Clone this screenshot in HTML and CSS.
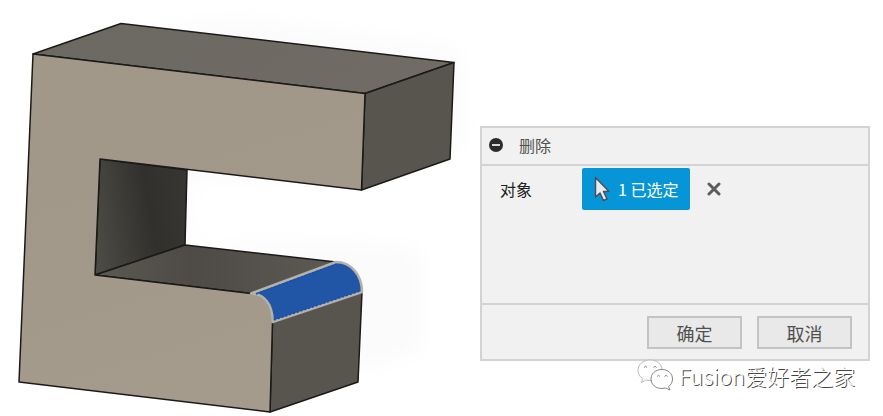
FILE: index.html
```html
<!DOCTYPE html>
<html lang="zh-CN">
<head>
<meta charset="utf-8">
<title>删除</title>
<link rel="stylesheet" href="styles.css">
</head>
<body>
<main class="workspace">
  <svg class="model" viewBox="0 0 480 416" aria-hidden="true">
    <defs>
      <linearGradient id="front" x1="0" y1="0" x2="0.3" y2="1">
        <stop offset="0" stop-color="#a1988a"/>
        <stop offset="0.4" stop-color="#a19889"/>
        <stop offset="1" stop-color="#a49b8c"/>
      </linearGradient>
      <linearGradient id="top" x1="0" y1="0" x2="1" y2="0.2">
        <stop offset="0" stop-color="#6b6961"/>
        <stop offset="1" stop-color="#706b65"/>
      </linearGradient>
      <linearGradient id="inner" x1="0" y1="0.6" x2="1" y2="0.4">
        <stop offset="0" stop-color="#4c4a45"/>
        <stop offset="0.6" stop-color="#32302c"/>
        <stop offset="1" stop-color="#373531"/>
      </linearGradient>
      <linearGradient id="floor" x1="0" y1="0" x2="1" y2="0">
        <stop offset="0" stop-color="#5c5952"/>
        <stop offset="0.4" stop-color="#4e4b46"/>
        <stop offset="1" stop-color="#5d5a54"/>
      </linearGradient>
      <filter id="soft" x="-10%" y="-10%" width="120%" height="120%">
        <feGaussianBlur stdDeviation="10"/>
      </filter>
    </defs>
    <path fill="#fbfbfb" filter="url(#soft)" d="M121 33L240 18L460 48L465 145L362 180H187V245L340 240L422 250V350L358 372L300 300L150 200Z"/>
    <g stroke="#1b1a18" stroke-width="1.5" stroke-linejoin="round">
      <path fill="url(#top)" d="M33 54L121 23.5L454 62.5L365 93.5Z"/>
      <path fill="#58554e" d="M365 93.5L454 62.5L450 159L361.500 190Z"/>
      <path fill="url(#inner)" d="M100 159L187 170L185 245L95 275Z"/>
      <path fill="url(#floor)" d="M95 275L185 245L336 262L251 293.500Z"/>
      <path fill="#58554e" d="M272.500 322L362 292L358 382L270 412Z"/>
      <path fill="url(#front)" d="M33 54L365 93.500L361.500 190L100 159L95 275L251 293.500C264 294 273 304 272.500 322L270 412L19 382Z"/>
    </g>
    <path fill="#2155a5" stroke="#b5b2ac" stroke-width="2.500" stroke-linejoin="round" d="M251 293.500L336 262C351 262 362 275 362 292L272.500 322C273 304 264 294 251 293.500Z"/>
    <path fill="none" stroke="#164fae" stroke-width="1.500" stroke-dasharray="2 2" d="M256 294L337 264M274 320L360 291"/>
  </svg>

  <div class="side">
    <section class="dialog" aria-labelledby="dialog-title">
      <header class="dialog-header">
        <button class="icon-button" type="button" aria-label="折叠">
          <svg width="14" height="14" viewBox="0 0 14 14"><circle cx="7" cy="7" r="7" fill="#2b2b2b"/><path d="M3 7H11" stroke="#d8d8d8" stroke-width="2"/></svg>
        </button>
        <h1 class="title" id="dialog-title">删除</h1>
      </header>
      <div class="dialog-body">
        <span class="label" id="object-label">对象</span>
        <button class="selection" type="button" aria-describedby="object-label">
          <svg width="16" height="26" viewBox="0 0 16 26"><path d="M1.500 1.500V21L6 17L9.500 24.500L13 23L9.500 15.500H15Z" fill="#e9ecee" stroke="#46525b" stroke-width="1.500" stroke-linejoin="round"/></svg>
          <span>1 已选定</span>
        </button>
        <button class="icon-button" type="button" aria-label="清除选择">
          <svg width="14" height="14" viewBox="0 0 14 14"><path d="M2 2L12 12M12 2L2 12" stroke="#5c5c5c" stroke-width="3" stroke-linecap="round"/></svg>
        </button>
      </div>
      <footer class="dialog-footer">
        <button class="action" type="button">确定</button>
        <button class="action" type="button">取消</button>
      </footer>
    </section>
    <div class="credit">
      <svg width="36" height="32" viewBox="0 0 36 32" fill="#fff" stroke="#777" stroke-width="0.900" stroke-linejoin="round">
        <path stroke="#b4b4b4" d="M13 1C6 1 1 5.500 1 11.500C1 15 3 18 5.500 19.500L4.500 23.500L9 21C17 23 25 18 25 11C25 5 20 1 13 1Z"/>
        <path d="M25 10.500C18.500 10.500 14 14.500 14 20C14 25.500 18.500 29.500 25 29.500L28.500 29L33 31L31.500 27.500C34 26 35.500 23 35.500 20C35.500 14.500 31 10.500 25 10.500Z"/>
        <path fill="none" d="M7 8.500Q8.500 6 10 8.500M16.500 8.500Q18 6 19.500 8.500M20 17.500Q21.500 15 23 17.500M27.500 17.500Q29 15 30.500 17.500"/>
      </svg>
      <span class="credit-name">Fusion爱好者之家</span>
    </div>
  </div>
</main>
</body>
</html>
```
FILE: styles.css
```css
* {
  box-sizing: border-box;
}

body {
  margin: 0;
  background: #fff;
  color: #505050;
  font: 16px/24px "Noto Sans CJK SC", sans-serif;
}

button {
  padding: 0;
  border: 0;
  background: none;
  color: inherit;
  font: inherit;
  cursor: pointer;
}

svg {
  display: block;
}

.workspace {
  display: grid;
  grid-template-columns: 480fr 390fr;
  align-items: start;
  padding-right: 13px;
}

.model {
  width: 100%;
}

.side {
  padding-top: 126px;
}

.dialog {
  border: 2px solid #d3d3d3;
  background: #f1f1f1;
}

.dialog-header {
  display: flex;
  align-items: center;
  gap: 16px;
  height: 38px;
  padding: 0 7px 2px;
  border-bottom: 2px solid #d3d3d3;
}

.title {
  margin: 0;
  font-size: 16px;
  font-weight: 400;
}

.dialog-body {
  display: flex;
  align-items: flex-start;
  min-height: 137px;
  padding: 2px 18px;
}

.label {
  width: 82px;
  line-height: 42px;
  color: #222;
}

.selection {
  display: flex;
  align-items: center;
  gap: 8px;
  height: 42px;
  padding: 0 12px;
  border-radius: 2px;
  background: #0696d7;
  color: #fff;
}

.dialog-body .icon-button {
  padding: 14px 17px;
}

.dialog-footer {
  display: flex;
  justify-content: flex-end;
  gap: 15px;
  padding: 11px 16px 10px;
  border-top: 2px solid #d3d3d3;
}

.action {
  width: 95px;
  height: 33px;
  border: 2px solid #c3c3c3;
  background: #e9e9e9;
  font-size: 18px;
  line-height: 24px;
}

.credit {
  position: relative;
  display: flex;
  justify-content: flex-end;
  gap: 6px;
  margin-top: -2px;
  padding-right: 15px;
}

.credit-name {
  color: #fff;
  font-size: 22px;
  font-weight: 300;
  line-height: 32px;
  text-shadow: 1px 1px 0 #444;
}
```
